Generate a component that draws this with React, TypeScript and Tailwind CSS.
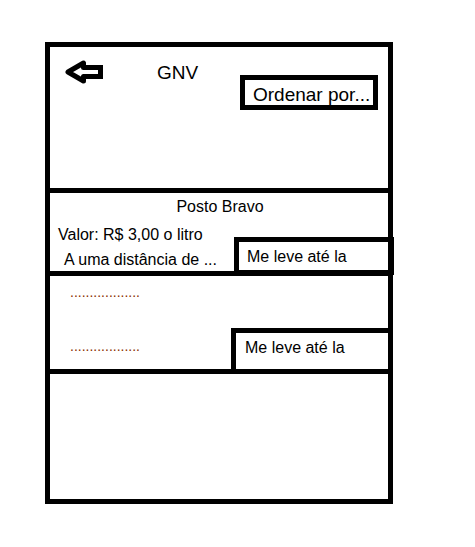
import type { ReactNode } from "react";

function BackArrow() {
  return (
    <svg width="38" height="24" viewBox="0 0 38 24" fill="none" aria-hidden="true">
      <path
        d="M3 12 L18.5 3 V7.5 H35.5 V16.5 H18.5 V21 Z"
        stroke="#000"
        strokeWidth="5"
        strokeLinejoin="round"
      />
      <path d="M34 5 H38 V19 H34 Z" fill="#000" />
    </svg>
  );
}

function Section({ className, children }: { className: string; children?: ReactNode }) {
  return <section className={`flex border-b-[5px] border-black ${className}`}>{children}</section>;
}

export default function App() {
  return (
    <div className="bg-white pt-[42px] pb-[43px] pl-[45px] pr-[82px] font-['Liberation_Sans',Arial,sans-serif] text-base leading-[18px] text-black">
      <main className="flex flex-col border-x-[5px] border-t-[5px] border-black">
        <header className="flex h-[146px] items-start border-b-[5px] border-black pt-[13px] pl-[15px] pr-[10px]">
          <button type="button" aria-label="Voltar" className="shrink-0">
            <BackArrow />
          </button>
          <h1 className="ml-[54px] text-[19px] leading-[26px]">GNV</h1>
          <button
            type="button"
            className="mt-[15px] ml-auto h-[35px] w-[138px] whitespace-nowrap border-[5px] border-black pt-[2px] pl-2 text-left text-[19px] leading-[26px]"
          >
            Ordenar por...
          </button>
        </header>

        <Section className="h-[83px] flex-col pt-[5px]">
          <h2 className="pl-[2px] text-center">Posto Bravo</h2>
          <div className="flex grow justify-between">
            <div className="flex flex-col gap-[7px] pt-[10px] pl-2">
              <p>Valor: R$ 3,00 o litro</p>
              <p className="pl-[6px]">A uma distância de ...</p>
            </div>
            <button
              type="button"
              className="-mr-[6px] -mb-1 h-[38px] w-[160px] shrink-0 self-end border-[5px] border-black pt-[2px] pl-2 text-left"
            >
              Me leve até la
            </button>
          </div>
        </Section>

        <Section className="h-[98px] justify-between">
          <div className="flex flex-col gap-9 pt-[7px] pl-5 text-sm leading-[18px] text-[#8b3000]">
            <p>..................</p>
            <p>..................</p>
          </div>
          <button
            type="button"
            className="h-[41px] w-[157px] shrink-0 self-end border-t-[5px] border-l-[5px] border-black pb-[6px] pl-[9px] text-left"
          >
            Me leve até la
          </button>
        </Section>

        <Section className="h-[130px]" />
      </main>
    </div>
  );
}
